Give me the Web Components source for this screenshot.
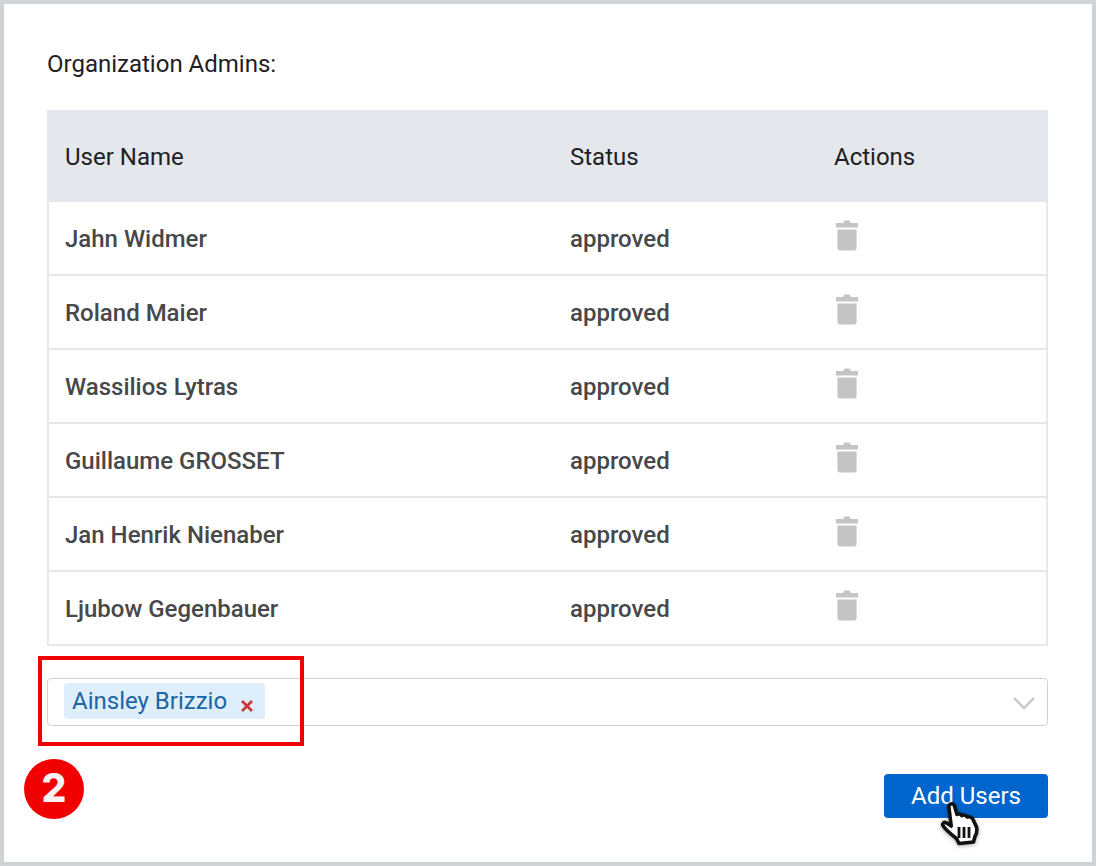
<!DOCTYPE html>
<html>
<head>
<meta charset="utf-8">
<title>Organization Admins</title>
<style>
  html, body { margin: 0; padding: 0; background: #fff; }
  body { font-family: Roboto, "Liberation Sans", sans-serif; }
</style>
</head>
<body>
<admin-page>
  <span slot="title">Organization Admins:</span>
  <admin-table>
    <admin-row name="Jahn Widmer" status="approved"></admin-row>
    <admin-row name="Roland Maier" status="approved"></admin-row>
    <admin-row name="Wassilios Lytras" status="approved"></admin-row>
    <admin-row name="Guillaume GROSSET" status="approved"></admin-row>
    <admin-row name="Jan Henrik Nienaber" status="approved"></admin-row>
    <admin-row name="Ljubow Gegenbauer" status="approved"></admin-row>
  </admin-table>
  <user-select slot="select"><user-chip>Ainsley Brizzio</user-chip></user-select>
  <add-button slot="action">Add Users</add-button>
</admin-page>

<script>
class AdminPage extends HTMLElement {
  constructor() {
    super();
    this.attachShadow({ mode: "open" });
    this.shadowRoot.innerHTML = `
      <style>
        :host {
          display: block;
          box-sizing: border-box;
          width: 1096px;
          height: 866px;
          border: 4px solid #cfd3d6;
          padding: 46px 44px 0 43px;
          position: relative;
          background: #fff;
        }
        .title { font-size: 24px; line-height: 28px; color: #1f2023; height: 60px; }
        .select { margin-top: 32px; }
        .action { display: flex; justify-content: flex-end; margin-top: 48px; }
        .mark {
          position: absolute;
          left: 34px;
          top: 652px;
          width: 266px;
          height: 90px;
          box-sizing: border-box;
          border: 4px solid #f00000;
        }
        .step {
          position: absolute;
          left: 20px;
          top: 755px;
          width: 60px;
          height: 60px;
          border-radius: 50%;
          background: #f00000;
          color: #f8f4f4;
          font: 800 39px/58px Inter, Roboto, "Liberation Sans", sans-serif;
          text-align: center;
        }
      </style>
      <div class="title"><slot name="title"></slot></div>
      <slot></slot>
      <div class="select"><slot name="select"></slot></div>
      <div class="action"><slot name="action"></slot></div>
      <div class="mark"></div>
      <div class="step">2</div>
    `;
  }
}

class AdminTable extends HTMLElement {
  constructor() {
    super();
    this.attachShadow({ mode: "open" });
    this.shadowRoot.innerHTML = `
      <style>
        :host { display: block; width: 1001px; }
        .head {
          display: grid;
          grid-template-columns: 505px 264px 1fr;
          box-sizing: border-box;
          height: 92px;
          align-items: center;
          padding: 2px 0 0 18px;
          background: #e4e7eb;
          color: #1f2023;
          font-size: 24px;
        }
        .body { border: 2px solid #e6e7e8; border-top: 0; }
      </style>
      <div class="head"><span>User Name</span><span>Status</span><span>Actions</span></div>
      <div class="body"><slot></slot></div>
    `;
  }
}

class AdminRow extends HTMLElement {
  constructor() {
    super();
    this.attachShadow({ mode: "open" });
    this.shadowRoot.innerHTML = `
      <style>
        :host { display: block; }
        :host(:not(:last-child)) .row { border-bottom: 2px solid #e6e7e8; }
        .row {
          display: grid;
          grid-template-columns: 505px 264px 1fr;
          box-sizing: border-box;
          height: 74px;
          align-items: center;
          padding: 2px 0 0 16px;
          color: #47484a;
          font-size: 24px;
          font-weight: 500;
        }
        :host(:last-child) .row { height: 72px; }
        svg { display: block; margin: -9px 0 0 1px; }
      </style>
      <div class="row">
        <span class="name"></span>
        <span class="status"></span>
        <svg width="24" height="34" viewBox="0 0 24 34">
          <path fill="#c4c4c4" d="M1 5h22v4.4H1zM8 5l1.5-2.6h5L16 5z"/>
          <path fill="#c4c4c4" d="M2.4 11.4h19.2v18.4a2.6 2.6 0 0 1-2.6 2.6H5a2.6 2.6 0 0 1-2.6-2.6z"/>
        </svg>
      </div>
    `;
  }

  connectedCallback() {
    this.shadowRoot.querySelector(".name").textContent = this.getAttribute("name");
    this.shadowRoot.querySelector(".status").textContent = this.getAttribute("status");
  }
}

class UserSelect extends HTMLElement {
  constructor() {
    super();
    this.attachShadow({ mode: "open" });
    this.shadowRoot.innerHTML = `
      <style>
        :host {
          display: flex;
          box-sizing: border-box;
          width: 1001px;
          height: 48px;
          align-items: center;
          justify-content: space-between;
          padding: 0 12px 2px 16px;
          border: 1px solid #d2d2d2;
          border-radius: 4px;
          background: #fff;
        }
        svg { display: block; margin-top: 4px; }
      </style>
      <slot></slot>
      <svg width="22" height="14" viewBox="0 0 22 14">
        <path d="M1 2 11 12 21 2" fill="none" stroke="#c9c9c9" stroke-width="2.4"/>
      </svg>
    `;
  }
}

class UserChip extends HTMLElement {
  constructor() {
    super();
    this.attachShadow({ mode: "open" });
    this.shadowRoot.innerHTML = `
      <style>
        :host {
          display: flex;
          box-sizing: border-box;
          width: 201px;
          height: 36px;
          align-items: center;
          padding-left: 8px;
          border-radius: 4px;
          background: #deeefb;
          color: #1a65a5;
          font-size: 24px;
        }
        svg { display: block; margin: 10px 0 0 13px; }
      </style>
      <slot></slot>
      <svg width="14" height="14" viewBox="0 0 14 14">
        <path d="M2 2 12 12M12 2 2 12" stroke="#cb3338" stroke-width="2.6" fill="none"/>
      </svg>
    `;
  }
}

class AddButton extends HTMLElement {
  constructor() {
    super();
    this.attachShadow({ mode: "open" });
    this.shadowRoot.innerHTML = `
      <style>
        :host {
          display: flex;
          box-sizing: border-box;
          width: 164px;
          height: 44px;
          align-items: center;
          justify-content: center;
          position: relative;
          border-radius: 4px;
          background: #0065cc;
          color: #fff;
          font-size: 24px;
        }
        svg {
          position: absolute;
          left: 57px;
          top: 28px;
          overflow: visible;
          filter: drop-shadow(0 1px 2px rgba(0,0,0,.35));
        }
      </style>
      <slot></slot>
      <svg width="38" height="44" viewBox="0 0 38 44">
        <path d="M8.5 3C9.8 1 12.7 1.4 13.3 3.6L16 12.5C17.6 11.5 20 12 20.8 13.6 22.6 12.6 25 13.2 26 15 28 14.2 31 15.2 32 17.4L35.5 25C36.2 28 35.5 32 34 34.5L32.5 40 18 41.5 15.5 36.5C11 33 5 28 2.2 24 .8 22 2.8 19.6 5.2 20.8L10.2 24 8 6C7.8 5 8 3.8 8.5 3z" fill="#fff" stroke="#111" stroke-width="3.6" stroke-linejoin="round"/>
        <path d="M18 25v11M23 25v11M28 25v11" fill="none" stroke="#111" stroke-width="2.8"/>
      </svg>
    `;
  }
}

customElements.define("admin-page", AdminPage);
customElements.define("admin-table", AdminTable);
customElements.define("admin-row", AdminRow);
customElements.define("user-select", UserSelect);
customElements.define("user-chip", UserChip);
customElements.define("add-button", AddButton);
</script>
</body>
</html>
